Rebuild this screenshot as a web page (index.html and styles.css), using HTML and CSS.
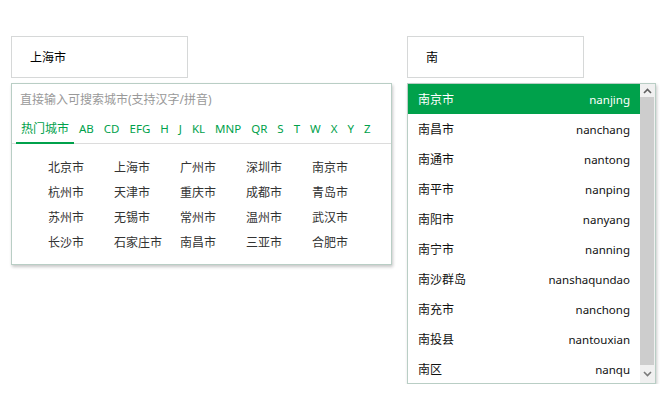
FILE: index.html
```html
<!DOCTYPE html>
<html lang="zh-CN">
  <head>
    <meta charset="UTF-8" />
    <title>城市选择</title>
    <link rel="stylesheet" href="styles.css">
  </head>
  <body>
    <div class="picker">
      <input class="city-input" type="text" value="上海市" />
      <div class="panel hot-panel">
        <input class="search" type="text" placeholder="直接输入可搜索城市(支持汉字/拼音)" />
        <div class="tabs">
          <span class="tab active">热门城市</span>
          <span class="tab">AB</span>
          <span class="tab">CD</span>
          <span class="tab">EFG</span>
          <span class="tab">H</span>
          <span class="tab">J</span>
          <span class="tab">KL</span>
          <span class="tab">MNP</span>
          <span class="tab">QR</span>
          <span class="tab">S</span>
          <span class="tab">T</span>
          <span class="tab">W</span>
          <span class="tab">X</span>
          <span class="tab">Y</span>
          <span class="tab">Z</span>
        </div>
        <div class="cities">
          <span>北京市</span><span>上海市</span><span>广州市</span><span>深圳市</span><span>南京市</span>
          <span>杭州市</span><span>天津市</span><span>重庆市</span><span>成都市</span><span>青岛市</span>
          <span>苏州市</span><span>无锡市</span><span>常州市</span><span>温州市</span><span>武汉市</span>
          <span>长沙市</span><span>石家庄市</span><span>南昌市</span><span>三亚市</span><span>合肥市</span>
        </div>
      </div>
    </div>

    <div class="picker picker-right">
      <input class="city-input" type="text" value="南" />
      <div class="panel result-panel">
        <ul class="results">
          <li class="active"><span>南京市</span><span class="py">nanjing</span></li>
          <li><span>南昌市</span><span class="py">nanchang</span></li>
          <li><span>南通市</span><span class="py">nantong</span></li>
          <li><span>南平市</span><span class="py">nanping</span></li>
          <li><span>南阳市</span><span class="py">nanyang</span></li>
          <li><span>南宁市</span><span class="py">nanning</span></li>
          <li><span>南沙群岛</span><span class="py">nanshaqundao</span></li>
          <li><span>南充市</span><span class="py">nanchong</span></li>
          <li><span>南投县</span><span class="py">nantouxian</span></li>
          <li><span>南区</span><span class="py">nanqu</span></li>
        </ul>
        <div class="scrollbar">
          <div class="arrow up">
            <svg width="9" height="6" viewBox="0 0 9 6"><path d="M1 5 L4.5 1.5 L8 5" fill="none" stroke="#5f5f5f" stroke-width="1.6"/></svg>
          </div>
          <div class="thumb"></div>
          <div class="arrow down">
            <svg width="9" height="6" viewBox="0 0 9 6"><path d="M1 1 L4.5 4.5 L8 1" fill="none" stroke="#7a7a7a" stroke-width="1.6"/></svg>
          </div>
        </div>
      </div>
    </div>
  </body>
</html>
```

FILE: styles.css
```css
* {
  margin: 0;
  padding: 0;
  box-sizing: border-box;
  font-family: "Noto Sans", "Noto Sans CJK SC", sans-serif;
}

body {
  display: flex;
  gap: 15px;
  padding: 36px 0 0 11px;
  background: #fff;
  color: #222;
  font-size: 12px;
}

.picker {
  display: flex;
  flex-direction: column;
  gap: 5px;
  width: 381px;
}
.picker-right {
  width: 249px;
}

.city-input {
  width: 177px;
  height: 42px;
  border: 1px solid #d6d8d8;
  padding-left: 18px;
  font-size: 12px;
  color: #000;
  outline: none;
}

.panel {
  border: 1px solid #b9cec5;
  background: #fff;
  box-shadow: 1px 2px 3px rgba(0, 0, 0, 0.22);
}

/* hot cities */
.search {
  display: block;
  width: 100%;
  height: 31px;
  border: 0;
  padding: 0 8px;
  font-size: 12px;
  outline: none;
}
.search::placeholder {
  color: #999;
}

.tabs {
  display: flex;
  padding-left: 4px;
  border-bottom: 1px solid #dcdcdc;
  font-size: 11.5px;
}
.tab {
  padding: 0 5px;
  line-height: 27px;
  color: #00a14b;
  border-bottom: 2px solid transparent;
  margin-bottom: -1px;
}
.tab.active {
  font-size: 12px;
  border-bottom-color: #00a14b;
}

.cities {
  display: grid;
  grid-template-columns: repeat(5, 66px);
  grid-auto-rows: 25px;
  align-items: center;
  padding: 10px 0 10px 36px;
  color: #333;
}

/* search results */
.result-panel {
  display: flex;
  height: 301px;
}
.results {
  list-style: none;
  flex: 1;
  overflow: hidden;
}
.results li {
  display: flex;
  justify-content: space-between;
  align-items: center;
  height: 30px;
  padding: 0 10px;
  color: #111;
}
.results li.active {
  background: #00a14b;
  color: #fff;
}
.py {
  font-size: 11.5px;
}

.scrollbar {
  display: flex;
  flex-direction: column;
  width: 15px;
  background: #f0f0f0;
}
.arrow {
  display: flex;
  align-items: center;
  justify-content: center;
}
.arrow.up {
  height: 13px;
}
.arrow.down {
  height: 18px;
}
.thumb {
  flex: 1;
  margin: 0 1px 0 0;
  background: #cdcdcd;
}
```
